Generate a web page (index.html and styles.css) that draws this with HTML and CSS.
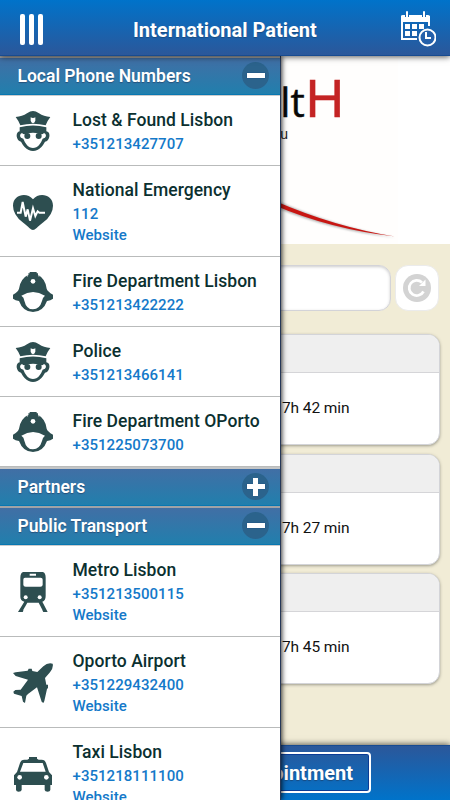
FILE: index.html
```html
<!DOCTYPE html>
<html lang="en">
<head>
<meta charset="utf-8">
<title>International Patient</title>
<link rel="stylesheet" href="styles.css">
</head>
<body>
<svg class="defs" aria-hidden="true">
  <symbol id="police" viewBox="0 0 120 120">
    <path d="M8 18Q28 17 42 7Q52 0 60 0Q68 0 78 7Q92 17 112 18Q104 28 98 43Q60 33 22 43Q16 28 8 18Z"/>
    <path fill="#fff" d="M53 19Q60 23 67 19V29Q65 35 60 37Q55 35 53 29Z"/>
    <path fill-rule="evenodd" d="M20 49Q60 38 100 49V61Q111 63 109 77Q106 90 96 92Q86 111 73 117Q60 123 47 117Q34 111 24 92Q13 90 11 76Q10 64 20 61ZM27 66Q21 68 21 75Q22 82 31 83Q38 101 50 109Q60 113 70 109Q82 101 89 83Q98 82 99 75Q99 68 93 66Q88 73 78 68Q60 62 42 68Q32 73 27 66Z"/>
    <circle cx="43" cy="75" r="9"/><circle cx="77" cy="75" r="9"/>
  </symbol>
  <symbol id="heart" viewBox="0 0 120 120">
    <path d="M60 114C53 114 48 106 29 91Q0 68 0 41C0 7 42 -1 60 22C78 -1 120 7 120 41Q120 68 91 91C72 106 67 114 60 114Z"/>
    <path fill="none" stroke="#fff" stroke-width="6" d="M12 62H23L29 30L38 74L44 52L51 86L60 49L67 72L74 58L79 62H96"/>
  </symbol>
  <symbol id="fire" viewBox="0 0 120 120">
    <path fill-rule="evenodd" d="M46 4H50V0H71V4H75V8Q98 21 101 50Q103 58 120 68V80Q113 85 102 87Q90 120 60 120Q30 120 18 87Q7 85 0 80V68Q16 59 18 50Q22 20 46 8ZM25 71Q33 75 34 86Q40 112 60 112Q80 112 87 87Q89 76 96 71Q60 49 25 71Z"/>
    <circle cx="60" cy="28" r="7" fill="#fff"/>
    <path fill="none" stroke="#fff" stroke-width="2" d="M45 6L43 14M76 6L78 14"/>
  </symbol>
  <symbol id="metro" viewBox="0 0 120 120">
    <path fill-rule="evenodd" d="M31 0H89Q98 2 98 17V72Q98 86 88 89L104 120H91L85 111H36L29 120H15L34 89Q22 86 22 74V17Q22 2 31 0ZM50 5V11H69V5ZM36 17Q31 17 31 23V38Q31 44 38 44H82Q89 44 89 38V23Q89 17 83 17Z"/>
    <path fill="#fff" d="M43 92H77L88 113V120H31V113Z"/>
    <circle cx="38" cy="76" r="6" fill="#fff"/><circle cx="80" cy="76" r="6" fill="#fff"/>
  </symbol>
  <symbol id="plane" viewBox="0 0 120 120">
    <path d="M119 2Q122 14 111 28L96 45L100 65L105 65V75L102 78L94 114L91 120L86 116L72 73L45 93L40 98L36 120L30 116L26 99L3 92L1 86L7 81L23 80L45 50L8 39L0 30L8 28L44 23L47 17H56L58 24L73 27L91 10Q104 -2 119 2Z"/>
  </symbol>
  <symbol id="taxi" viewBox="0 0 120 120">
    <path fill-rule="evenodd" d="M43 17L48 14V9H72V14L77 17H86Q96 17 99 27L108 54L117 64V93H112V108Q111 113 104 113Q96 113 95 108V93H26V108Q25 113 17 113Q10 113 9 108V93H3V64L12 54L21 27Q24 17 34 17ZM31 27L21 53H98L89 27Z"/>
    <circle cx="20" cy="70" r="7" fill="#fff"/><circle cx="100" cy="70" r="7" fill="#fff"/>
  </symbol>
</svg>
<div class="app">
  <header class="topbar">
    <button class="menu" aria-label="Menu"><i></i><i></i><i></i></button>
    <h1>International Patient</h1>
    <svg class="calendar" viewBox="0 0 36 36" fill="none" stroke="#fff">
      <path stroke-width="2" d="M29 15V6H2V28H17"/>
      <path fill="#fff" stroke="none" d="M1 5Q1 4 3 4H28Q30 4 30 6V11H1Z"/>
      <path stroke="#1565b4" stroke-width="4" d="M7 2V6M24 2V6"/>
      <path stroke-width="2" stroke-linecap="round" d="M7 1V7M24 1V7"/>
      <path fill="#fff" stroke="none" d="M5 13h5v5H5zM12 13h5v5h-5zM19 13h5v5h-5zM5 20h5v5H5zM12 20h5v5h-5z"/>
      <circle cx="27.5" cy="26.5" r="8" stroke-width="2" fill="#2460aa"/>
      <path stroke-width="2" d="M26 21V27H31"/>
    </svg>
  </header>
  <main class="page">
    <section class="brand">
      <div class="wordmark"><span>lt</span><b>H</b></div>
      <div class="tagline">u</div>
      <svg class="swoosh" viewBox="0 0 170 50">
        <path class="swoosh-shade" d="M50 9Q110 36 170 46.5Q105 39 50 16Z"/>
        <path fill="#c81612" d="M50 10Q110 36 170 45.5Q105 38 50 14.5Z"/>
      </svg>
    </section>
    <div class="search">
      <div class="field"></div>
      <button class="refresh" aria-label="Refresh">
        <svg viewBox="0 0 28 28"><circle cx="14" cy="14" r="14" fill="#d3d3d3"/><path d="M20.5 17.5A7.6 7.6 0 1 1 19 8.4" fill="none" stroke="#fff" stroke-width="2.7"/><path fill="#fff" d="M22.5 5.5V12H16Z"/></svg>
      </button>
    </div>
    <div class="cards">
      <article class="card"><div class="card-head"></div><div class="card-body">7h 42 min</div></article>
      <article class="card"><div class="card-head"></div><div class="card-body">7h 27 min</div></article>
      <article class="card"><div class="card-head"></div><div class="card-body">7h 45 min</div></article>
    </div>
  </main>
  <footer class="bottombar"><button class="appoint">Appointment</button></footer>
  <nav class="drawer">
    <h2 class="group">Local Phone Numbers<span class="toggle"></span></h2>
    <ul>
      <li><svg><use href="#police"/></svg><div><h3>Lost &amp; Found Lisbon</h3><a>+351213427707</a></div></li>
      <li><svg><use href="#heart"/></svg><div><h3>National Emergency</h3><a>112</a><a>Website</a></div></li>
      <li><svg><use href="#fire"/></svg><div><h3>Fire Department Lisbon</h3><a>+351213422222</a></div></li>
      <li><svg><use href="#police"/></svg><div><h3>Police</h3><a>+351213466141</a></div></li>
      <li><svg><use href="#fire"/></svg><div><h3>Fire Department OPorto</h3><a>+351225073700</a></div></li>
    </ul>
    <h2 class="group">Partners<span class="toggle plus"></span></h2>
    <h2 class="group">Public Transport<span class="toggle"></span></h2>
    <ul>
      <li><svg><use href="#metro"/></svg><div><h3>Metro Lisbon</h3><a>+351213500115</a><a>Website</a></div></li>
      <li><svg><use href="#plane"/></svg><div><h3>Oporto Airport</h3><a>+351229432400</a><a>Website</a></div></li>
      <li><svg><use href="#taxi"/></svg><div><h3>Taxi Lisbon</h3><a>+351218111100</a><a>Website</a></div></li>
    </ul>
  </nav>
</div>
</body>
</html>
```

FILE: styles.css
```css
* { box-sizing: border-box; }
body { margin: 0; font-family: Roboto, "Liberation Sans", sans-serif; }
h1, h2, h3, ul { margin: 0; padding: 0; list-style: none; }
button { border: 0; padding: 0; background: none; font: inherit; }
.defs { position: absolute; width: 0; height: 0; }
.app { position: relative; width: 450px; height: 800px; overflow: hidden; display: flex; flex-direction: column; background: #f1ecd6; }

.topbar { position: relative; z-index: 3; flex: none; height: 56px; display: flex; align-items: center; padding: 3px 14px 0 20px; background: linear-gradient(#0073ca, #2b579a); border-bottom: 1px solid #174b91; box-shadow: 0 1px 6px rgba(0,0,0,.65); }
.menu { display: flex; gap: 4px; width: 35px; }
.menu i { width: 5px; height: 31px; border-radius: 2px; background: #fff; }
.topbar h1 { flex: 1; padding-left: 78px; color: #fff; font-size: 20px; font-weight: 700; line-height: 24px; padding-top: 2px; white-space: nowrap; text-shadow: 0 1px 1px #174b80; }
.calendar { width: 36px; height: 36px; }

.page { flex: 1; min-height: 0; }
.brand { height: 188px; background: linear-gradient(90deg, #fffefd 398px, #fff 398px); padding: 17px 0 0; display: flex; flex-direction: column; }
.wordmark { width: 344px; height: 52px; display: flex; justify-content: flex-end; align-items: baseline; font: 40px/52px "Open Sans", sans-serif; color: #080808; -webkit-text-stroke: .5px; }
.wordmark b { font: 53px/52px "Liberation Sans", sans-serif; color: #c42424; margin-left: 1px; }
.tagline { width: 288px; text-align: right; font: 14px/18px "Liberation Sans", sans-serif; color: #222; }
.swoosh { width: 170px; height: 50px; margin: 48px 0 0 225px; overflow: visible; }
.swoosh-shade { fill: #777; opacity: .6; filter: blur(1px); }

.search { display: flex; gap: 4px; padding: 21px 11px 0; }
.field { flex: 1; height: 46px; border: 1px solid #d3d3d8; border-radius: 12px; background: #fff; box-shadow: inset 0 1px 3px #ccc; }
.refresh { width: 44px; height: 46px; border-radius: 13px; background: #fff; border: 1px solid #ebebeb; display: grid; place-items: center; }
.refresh svg { width: 28px; height: 28px; }
.cards { display: flex; flex-direction: column; gap: 8.5px; padding: 23px 10px 0; }
.card { height: 111px; border: 1px solid #d3d4d8; border-radius: 12px; overflow: hidden; background: #fff; box-shadow: 0 1px 3px rgba(90,90,80,.55); }
.card-head { height: 38px; background: #efefef; border-bottom: 1px solid #d5d5d8; }
.card-body { height: 71px; padding-left: 271px; font-size: 15.5px; line-height: 71px; letter-spacing: -.1px; color: #111; }

.bottombar { position: relative; flex: none; height: 55px; padding: 6px 0 0 79px; background: linear-gradient(#2b579a, #0073ca); border-top: 1px solid #174b91; box-shadow: 0 -1px 6px rgba(0,0,0,.6); }
.appoint { width: 292px; height: 41px; padding-right: 16px; text-align: right; border: 2px solid #fff; border-radius: 4px; color: #fff; font-size: 20px; font-weight: 700; text-shadow: 0 1px 1px #174b80; box-shadow: inset 0 0 0 1px #0b3c95; }

.drawer { position: absolute; z-index: 2; top: 56px; bottom: 0; left: 0; width: 281px; overflow: hidden; background: #fff; border-right: 1px solid #263858; box-shadow: 1px 0 5px rgba(0,0,0,.8); clip-path: inset(0 -12px 0 0); }
.group { display: flex; align-items: center; justify-content: space-between; height: 39px; padding: 0 11px 0 17.5px; border-top: 2px solid #a0a3a6; border-bottom: 1px solid #0877b1; background: linear-gradient(#416fa5, #217fad); color: #fff; font-size: 17.5px; line-height: 34px; padding-bottom: 1px; font-weight: 600; letter-spacing: 0; text-shadow: 0 1px 1px #26517b; }
.toggle { width: 27px; height: 27px; border-radius: 50%; display: grid; place-items: center; background: #2b638c; }
.toggle::before, .plus::after { content: ""; grid-area: 1 / 1; width: 18px; height: 5px; background: #fff; box-shadow: 0 0 1px #123c78; }
.plus::after { width: 5px; height: 18px; box-shadow: none; }
.drawer ul { border-top: 1px solid #ccc; }
.drawer ul + .group { border-top: 2px solid #c3c5c6; }
.drawer li { display: flex; align-items: center; min-height: 70px; border-bottom: 1px solid #b9bbbb; }
.drawer li:nth-child(n) > svg { flex: none; width: 40px; height: 40px; margin: 1px 20px 0 12.5px; fill: #2d4e50; }
.drawer li > div { padding: 13px 0 9.5px; }
.drawer h3 { font-size: 17.5px; line-height: 23px; margin-bottom: 1.5px; font-weight: 500; letter-spacing: .05px; white-space: nowrap; color: #0b3030; }
.drawer a { display: block; font-size: 15px; line-height: 21.5px; font-weight: 500; letter-spacing: .05px; color: #1479c9; }
```
